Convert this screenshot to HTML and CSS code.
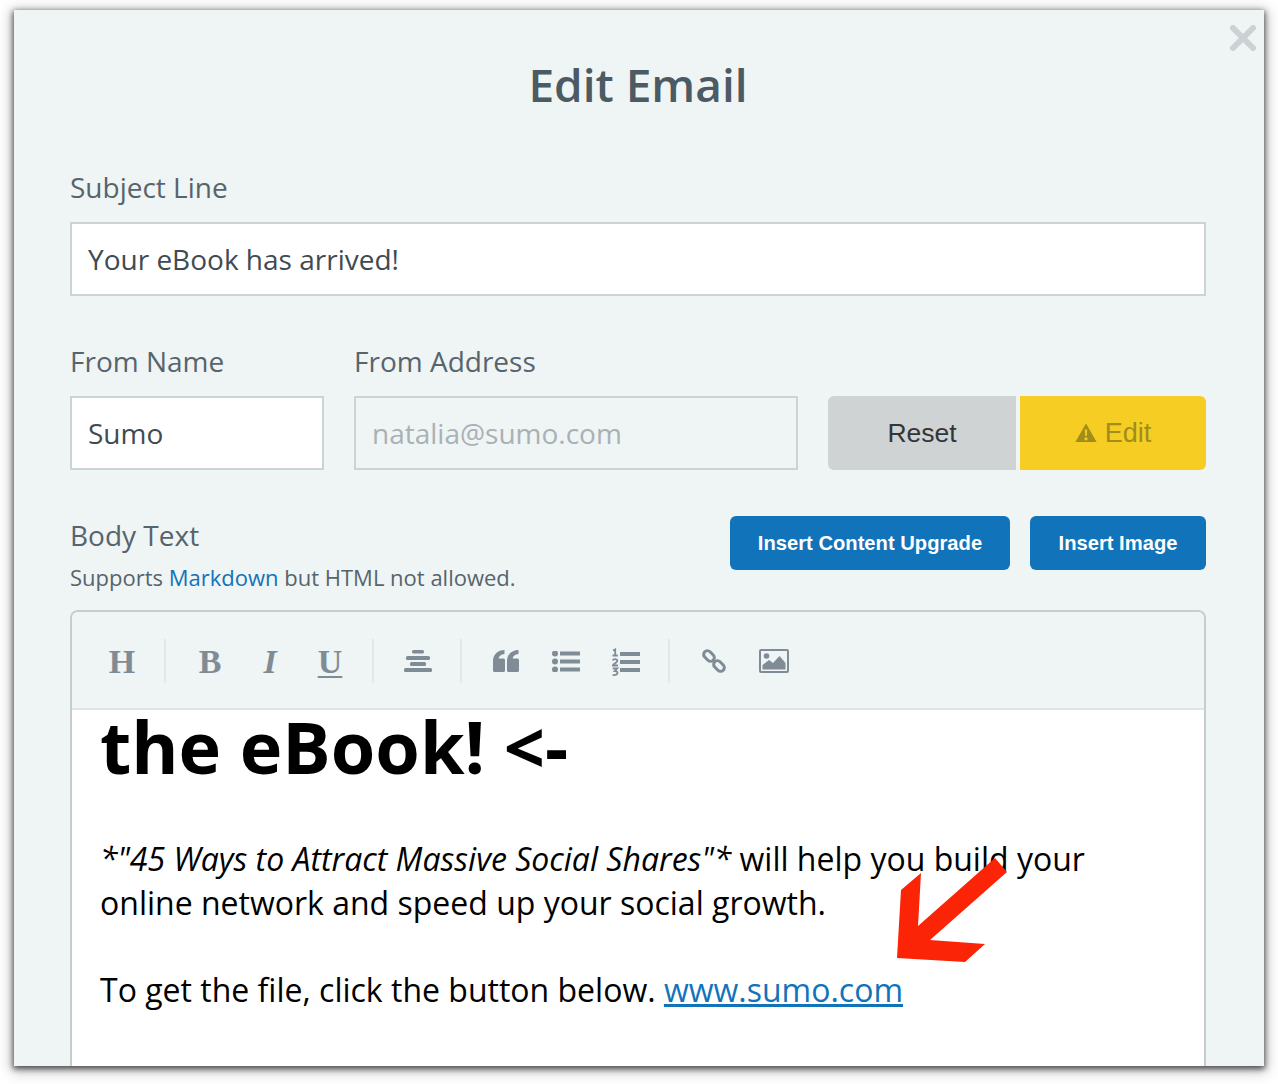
FILE: index.html
```html
<!DOCTYPE html>
<html lang="en">
<head>
<meta charset="utf-8">
<title>Edit Email</title>
<link rel="stylesheet" href="styles.css">
</head>
<body>
<div class="modal">
  <svg class="close" viewBox="0 0 26 26" width="26" height="26"><path d="M3 3L23 23M23 3L3 23" stroke="#ccd2d3" stroke-width="6" stroke-linecap="round"/></svg>
  <h1 class="title">Edit Email</h1>
  <div class="field">
    <label class="label">Subject Line</label>
    <div class="input">Your eBook has arrived!</div>
  </div>
  <div class="row">
    <div class="field name">
      <label class="label">From Name</label>
      <div class="input">Sumo</div>
    </div>
    <div class="field address">
      <label class="label">From Address</label>
      <div class="input disabled">natalia@sumo.com</div>
    </div>
    <div class="actions">
      <button class="btn reset">Reset</button>
      <button class="btn edit"><svg viewBox="0 0 22 20" width="22" height="20"><path fill-rule="evenodd" d="M11 0.5L21.6 19H0.4ZM9.8 6.5L10.2 13H11.8L12.2 6.5ZM11 14.2a1.6 1.6 0 1 0 0 3.2a1.6 1.6 0 1 0 0-3.2Z" fill="#a08d1c"/></svg>Edit</button>
    </div>
  </div>
  <div class="body-head">
    <div class="body-intro">
      <div class="label body-label">Body Text</div>
      <div class="hint">Supports <a class="hint-link">Markdown</a> but HTML not allowed.</div>
    </div>
    <div class="inserts">
      <button class="blue upgrade">Insert Content Upgrade</button>
      <button class="blue image">Insert Image</button>
    </div>
  </div>
  <div class="editor">
    <div class="toolbar">
      <span class="tool glyph">H</span>
      <i class="sep"></i>
      <span class="tool glyph">B</span>
      <span class="tool glyph it">I</span>
      <span class="tool glyph un">U</span>
      <i class="sep"></i>
      <span class="tool"><svg viewBox="0 0 28 22" width="28" height="22"><g fill="#7f8c96"><rect x="8" y="0" width="12" height="3.500" rx="1.500"/><rect x="2" y="6" width="24" height="4" rx="1.500"/><rect x="6" y="12" width="16" height="4" rx="1.500"/><rect x="0" y="18" width="28" height="4" rx="1.500"/></g></svg></span>
      <i class="sep"></i>
      <span class="tool"><svg viewBox="0 0 26 22" width="26" height="22"><path d="M11.500 0V4C8.500 4.200 6 6 5.800 8.500H10.500A1.500 1.500 0 0 1 12 10V20.500A1.500 1.500 0 0 1 10.500 22H1.500A1.500 1.500 0 0 1 0 20.500V11C0 4.500 5 0 11.500 0ZM25.500 0V4C22.500 4.200 20 6 19.800 8.500H24.500A1.500 1.500 0 0 1 26 10V20.500A1.500 1.500 0 0 1 24.500 22H15.500A1.500 1.500 0 0 1 14 20.500V11C14 4.500 19 0 25.500 0Z" fill="#7f8c96"/></svg></span>
      <span class="tool"><svg viewBox="0 0 28 21" width="28" height="21"><g fill="#7f8c96"><circle cx="3" cy="2.500" r="3"/><circle cx="3" cy="10.500" r="3"/><circle cx="3" cy="18.500" r="3"/><rect x="8" y="0.500" width="20" height="4"/><rect x="8" y="8.500" width="20" height="4"/><rect x="8" y="16.500" width="20" height="4"/></g></svg></span>
      <span class="tool"><svg viewBox="0 0 28 30" width="28" height="30"><g fill="#7f8c96"><rect x="8" y="6" width="20" height="4"/><rect x="8" y="14" width="20" height="4"/><rect x="8" y="22" width="20" height="4"/></g><g fill="none" stroke="#7f8c96" stroke-width="1.800"><path d="M1 4.500L3.200 3.500V9.500M0.500 9.500H5.800"/><path d="M0.700 14.500C1.500 12.500 5.500 12.800 5.300 15C5.200 16.800 1.200 17.500 0.800 19.500H6"/><path d="M0.700 22.500H5.200L2.800 25C6.800 25 6.500 29.500 0.700 29"/></g></svg></span>
      <i class="sep"></i>
      <span class="tool"><svg viewBox="0 0 26 26" width="26" height="26"><g fill="none" stroke="#7f8c96" stroke-width="3"><rect x="2" y="4.250" width="12" height="7.500" rx="3.750" transform="rotate(45 8 8)"/><rect x="12" y="14.250" width="12" height="7.500" rx="3.750" transform="rotate(45 18 18)"/></g></svg></span>
      <span class="tool"><svg viewBox="0 0 30 24" width="30" height="24"><rect x="1" y="1" width="28" height="22" rx="1" fill="none" stroke="#7f8c96" stroke-width="2"/><circle cx="7.500" cy="7" r="2.800" fill="#7f8c96"/><path d="M3.500 20.500V16L10 11L14 14L20.500 7L26.500 14V20.500Z" fill="#7f8c96"/></svg></span>
    </div>
    <div class="content">
      <div class="heading">the eBook! &lt;-</div>
      <p class="para"><em>*"45 Ways to Attract Massive Social Shares"*</em> will help you build your<br>online network and speed up your social growth.</p>
      <p class="para">To get the file, click the button below. <a class="link">www.sumo.com</a></p>
    </div>
  </div>
  <svg class="arrow" viewBox="0 0 112 105" width="112" height="105"><path d="M99 0L111 14L34 82L89 86L69 104L1 100L5 32L25 15L22 68Z" fill="#fb2407"/></svg>
</div>
</body>
</html>
```
FILE: styles.css
```css
* { box-sizing: border-box; }
html, body { margin: 0; height: 100%; background: #fff; overflow: hidden; }
body { padding: 10px 14px 18px; font-family: "Open Sans", sans-serif; }
.modal {
  position: relative;
  width: 1250px;
  height: 1056px;
  padding: 48px 58px 0 56px;
  background: #eff4f5;
  box-shadow: 0 2px 6px 1px rgba(0,0,0,.65), 0 3px 14px 3px rgba(0,0,0,.2);
  overflow: hidden;
}
.close { position: absolute; top: 15px; right: 8px; }
.title { margin: 0 0 60px; text-align: center; font-size: 46px; line-height: 52px; font-weight: 600; color: #4b5a63; }
.label { display: block; font-size: 28px; line-height: 34px; color: #57646c; margin-bottom: 18px; }
.input { height: 74px; padding: 0 16px; border: 2px solid #ccd3d6; background: #fff; font-size: 28px; line-height: 70px; color: #3f4b52; }
.input.disabled { background: transparent; color: #a9b1b5; }
.row { display: flex; margin-top: 48px; }
.name { width: 254px; margin-right: 30px; }
.address { width: 444px; margin-right: 30px; }
.actions { display: flex; gap: 4px; padding-top: 52px; }
.btn { height: 74px; border: 0; font-family: "Liberation Sans", sans-serif; font-size: 27px; }
.reset { width: 188px; background: #cfd3d3; color: #333637; border-radius: 6px 0 0 6px; font-size: 26.500px; }
.edit { width: 186px; background: #f6cd22; color: #a08d1c; border-radius: 0 6px 6px 0; display: flex; align-items: center; justify-content: center; gap: 8px; }
.body-head { display: flex; justify-content: space-between; margin-top: 46px; }
.body-intro { padding-top: 2px; }
.body-label { margin-bottom: 10px; }
.hint { font-size: 22px; line-height: 30px; color: #57646c; }
.hint-link { color: #1173b9; }
.inserts { display: flex; gap: 20px; }
.blue { height: 54px; border: 0; border-radius: 6px; background: #1173b9; color: #fff; font-family: "Liberation Sans", sans-serif; font-weight: 700; font-size: 20.200px; }
.upgrade { width: 280px; }
.image { width: 176px; }
.editor { margin-top: 18px; border: 2px solid #c6cdd0; border-bottom: 0; border-radius: 8px 8px 0 0; height: 470px; background: #fff; overflow: hidden; }
.toolbar { height: 98px; background: #eff4f5; border-bottom: 2px solid #dfe4e6; display: flex; align-items: center; padding-left: 20px; padding-top: 2px; }
.tool { width: 60px; display: flex; justify-content: center; align-items: center; color: #7f8c96; height: 44px; }
.glyph { font-family: "Liberation Serif", serif; font-weight: 700; font-size: 34px; padding-top: 2px; }
.it { font-style: italic; }
.un { text-decoration: underline; text-decoration-thickness: 2px; text-underline-offset: 3px; }
.sep { display: block; width: 2px; height: 44px; background: #e2e7e9; margin: 0 14px 0 12px; }
.content { padding: 0 28px; color: #000; }
.heading { font-size: 72px; line-height: 76px; font-weight: 700; margin-top: -2px; margin-bottom: 53px; }
.para { margin: 0 0 43px; font-size: 32px; line-height: 44px; }
.link { color: #1173b9; text-decoration: underline; }
.arrow { position: absolute; left: 882px; top: 848px; }
```
